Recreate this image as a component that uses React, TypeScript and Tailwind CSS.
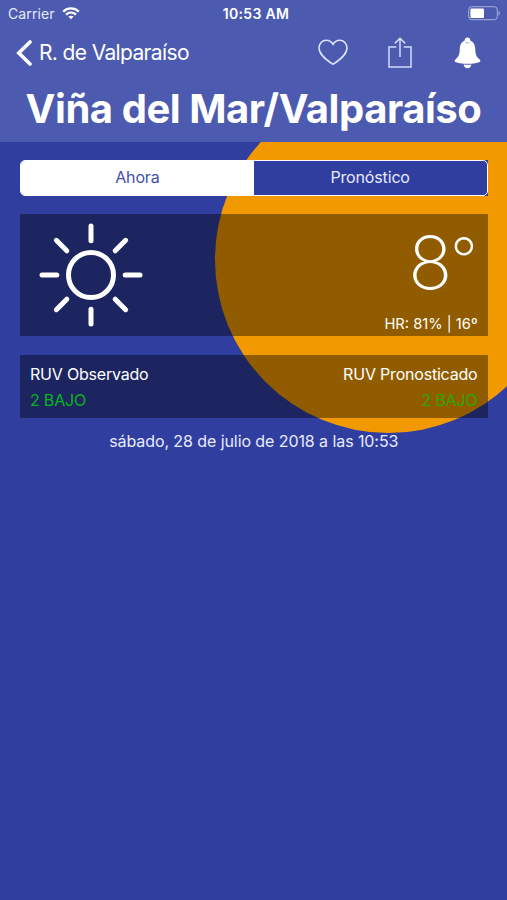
import React, {useState} from 'react';

const tabs = [
    {value: 'now', label: 'Ahora'},
    {value: 'forecast', label: 'Pronóstico'},
];

const rays = [0, 45, 90, 135, 180, 225, 270, 315];

const WifiIcon = () => (
    <svg width="18" height="13" viewBox="0 0 18 13" fill="none" stroke="white" strokeWidth="2.2">
        <path d="M1.2 4.6C5.6.4 12.4.4 16.8 4.6"/>
        <path d="M4 7.6C6.9 4.9 11.1 4.9 14 7.6"/>
        <path d="M9 12.2 6.4 9.6C7.9 8.3 10.1 8.3 11.6 9.6Z" fill="white" stroke="none"/>
    </svg>
);

const BatteryIcon = () => (
    <svg width="33" height="15" viewBox="0 0 33 15" fill="none">
        <rect x="0.7" y="0.7" width="28.6" height="13" rx="3" stroke="#a9b0dc" strokeWidth="1"/>
        <rect x="2.4" y="2.4" width="13.6" height="9.6" rx="1.2" fill="white"/>
        <path d="M30.6 5v4.4c1.6-.6 1.6-3.8 0-4.4Z" fill="#a9b0dc"/>
    </svg>
);

const HeartIcon = () => (
    <svg width="30" height="27" viewBox="0 0 30 27" fill="none" stroke="#e0e5ff" strokeWidth="1.5">
        <path d="M15 25.4C9.5 21.6 1 16 1 9 1 4.5 4.2 1.2 8.2 1.2 11.2 1.2 13.7 2.8 15 5.4 16.3 2.8 18.8 1.2 21.8 1.2 25.8 1.2 29 4.5 29 9 29 16 20.5 21.6 15 25.4Z"/>
    </svg>
);

const ShareIcon = () => (
    <svg width="24" height="31" viewBox="0 0 24 31" fill="none" stroke="#d3daf8" strokeWidth="1.5">
        <path d="M8.3 10H1v20h22V10h-7.3"/>
        <path d="M12 20V1.2M6.8 6.4l5.2-5.2 5.2 5.2"/>
    </svg>
);

const BellIcon = () => (
    <svg width="27" height="32" viewBox="0 0 27 32" fill="white">
        <circle cx="13.5" cy="3.3" r="2.7"/>
        <path d="M13.5 3C8.2 3.3 6 7.2 5.8 11.5 5.6 17 4.8 20 1.6 22.2 0 23.5.3 24.8 2 25.3 8.5 27.3 18.5 27.3 25 25.3 26.7 24.8 27 23.5 25.4 22.2 22.2 20 21.4 17 21.2 11.5 21 7.2 18.8 3.3 13.5 3Z"/>
        <path d="M9.7 27.4c2.5.4 5.1.4 7.6 0-.2 2.3-1.7 3.9-3.8 3.9s-3.6-1.6-3.8-3.9Z"/>
        <path d="M11.3 5a3 3 0 0 0 4.4 0" fill="none" stroke="#7d87c8" strokeWidth="0.7"/>
    </svg>
);

const SunIcon = () => (
    <svg width="104" height="104" viewBox="-52 -52 104 104" fill="none" stroke="white" strokeWidth="5" strokeLinecap="round">
        <circle r="22.5"/>
        {rays.map((angle) => (
            <path key={angle} d="M0 -34.2V-49" transform={`rotate(${angle})`}/>
        ))}
    </svg>
);

const App = () => {
    const [tab, setTab] = useState('now');

    return (
        <div className="relative isolate w-[507px] h-[900px] overflow-hidden bg-[#303f9f] font-['Inter','Liberation_Sans',sans-serif] text-white">
            {/* Sun disc behind the content */}
            <div className="absolute -z-10 left-[214.5px] top-[86px] w-[347px] h-[347px] rounded-full bg-[#f29900]"/>

            <header className="h-[142px] bg-[#4c5bb0]">
                <div className="flex items-center h-[27px] pl-2 pr-[6px] text-[14px]">
                    <div className="flex items-center flex-1 gap-[7px] text-[#e6e9fb]">
                        <span className="tracking-[0.1px]">Carrier</span>
                        <WifiIcon/>
                    </div>
                    <span className="ml-[3px] font-semibold tracking-[0.3px]">10:53 AM</span>
                    <div className="flex flex-1 justify-end">
                        <BatteryIcon/>
                    </div>
                </div>

                <div className="flex items-center h-[51px] pl-[16px] pr-[26px]">
                    <button className="flex items-center gap-[7px]">
                        <svg width="16" height="26" viewBox="0 0 16 26" fill="none" stroke="white" strokeWidth="3.6" strokeLinecap="round">
                            <path d="M14 2 2.8 13 14 24"/>
                        </svg>
                        <span className="text-[21px] leading-[26px] tracking-[-0.64px]">R. de Valparaíso</span>
                    </button>
                    <div className="flex items-center ml-auto">
                        <HeartIcon/>
                        <div className="ml-[40px] mr-[42px]">
                            <ShareIcon/>
                        </div>
                        <BellIcon/>
                    </div>
                </div>

                <h1 className="h-[62px] text-center text-[40px] leading-[62px] font-bold tracking-[-0.45px] whitespace-nowrap">
                    Viña del Mar/Valparaíso
                </h1>
            </header>

            <main className="pl-5 pr-[19.5px] pt-[17.5px]">
                <div className="bg-[#303f9f]">
                    <div className="flex h-[36px] border border-white rounded-[5px] overflow-hidden">
                        {tabs.map((t) => (
                            <button
                                key={t.value}
                                onClick={() => setTab(t.value)}
                                className={`flex-1 pb-[1px] text-[16px] leading-[24px] tracking-[-0.15px] ${
                                    tab === t.value ? 'bg-white text-[#4350ab]' : 'text-[#e8ebff]'
                                }`}
                            >
                                {t.label}
                            </button>
                        ))}
                    </div>
                </div>

                <section className="flex justify-between h-[122px] mt-[18px] pl-[19px] pr-[10px] bg-black/40">
                    <div className="pt-[9px]">
                        <SunIcon/>
                    </div>
                    <div className="flex flex-col items-end">
                        <div className="flex h-[100px] font-extralight tracking-[-2px]">
                            <span className="text-[73px] leading-[98px]">8</span>
                            <span className="mr-[2px] text-[60px] leading-[91px]">°</span>
                        </div>
                        <div className="text-[14.7px] leading-[20px] whitespace-nowrap">HR: 81% | 16º</div>
                    </div>
                </section>

                <section className="flex justify-between h-[63px] mt-[19.5px] px-[10px] pt-[5.5px] bg-black/40 text-[16px] leading-[26px] tracking-[-0.2px]">
                    <div>
                        <p>RUV Observado</p>
                        <p className="text-[#08b41c]">2 BAJO</p>
                    </div>
                    <div className="text-right">
                        <p>RUV Pronosticado</p>
                        <p className="text-[#2ca600]">2 BAJO</p>
                    </div>
                </section>

                <p className="mt-[10.5px] text-center text-[16px] leading-[24px] tracking-[-0.08px] text-[#e8ebff]">
                    sábado, 28 de julio de 2018 a las 10:53
                </p>
            </main>
        </div>
    );
};

export default App;
